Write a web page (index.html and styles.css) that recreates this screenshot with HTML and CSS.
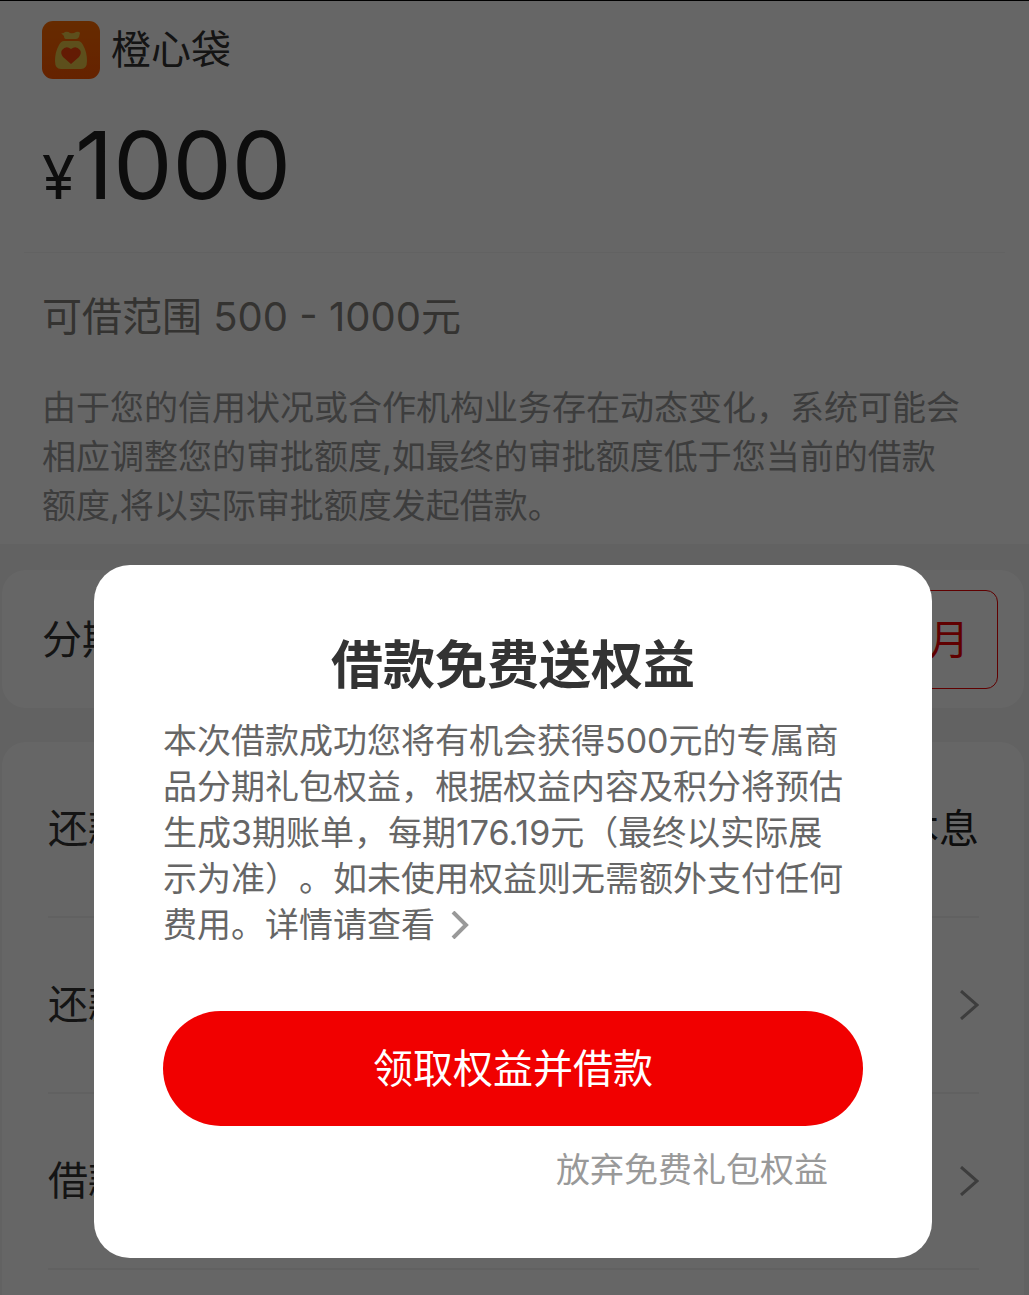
FILE: index.html
```html
<!DOCTYPE html>
<html lang="zh-CN">
<head>
  <meta charset="UTF-8" />
  <meta name="viewport" content="width=device-width, initial-scale=1" />
  <title>橙心袋</title>
  <link rel="stylesheet" href="styles.css">
</head>
<body>

  <main class="page">
    <section class="panel amount-panel">
      <header class="brand">
        <svg class="brand-logo" viewBox="0 0 58 58" aria-hidden="true">
          <defs>
            <linearGradient id="logoBg" x1="0" y1="0" x2="0" y2="1">
              <stop offset="0" stop-color="#ff6c00" />
              <stop offset="1" stop-color="#fd5600" />
            </linearGradient>
          </defs>
          <rect width="58" height="58" rx="11" fill="url(#logoBg)" />
          <path d="M19 12 Q21 13 23 11 Q26 10 28 12 Q31 13 34 11 Q37 10 38 12 L37 16 Q36 18 34 18 H24 Q22 18 22 15 Z" fill="#e8c547" />
          <path d="M22 20 H36 Q39 20 41 24 Q45 31 45 40 Q45 48 39 48 H19 Q13 48 13 40 Q13 31 17 24 Q19 20 22 20 Z" fill="#e8c547" />
          <path d="M29 43 L21 36 Q18 32 20 29 Q24 24 29 28 Q34 24 38 29 Q40 32 37 36 Z" fill="#f8440c" />
        </svg>
        <h1 class="brand-name">橙心袋</h1>
      </header>

      <div class="amount">
        <label class="amount-sign" for="amount">¥</label>
        <input class="amount-input" type="text" id="amount" inputmode="numeric" value="1000" />
      </div>

      <p class="range">可借范围 500 - 1000元</p>
      <p class="notice">由于您的信用状况或合作机构业务存在动态变化，系统可能会<br>相应调整您的审批额度,如最终的审批额度低于您当前的借款<br>额度,将以实际审批额度发起借款。</p>
    </section>

    <section class="panel term-panel">
      <span>分期</span>
      <button type="button" class="term">月</button>
    </section>

    <section class="panel detail-panel">
      <div class="row">
        <span>还款</span>
        <span class="row-value">本息</span>
      </div>
      <a class="row" href="#">
        <span>还款</span>
        <svg class="arrow" viewBox="0 0 20 30" aria-hidden="true"><path d="M2 1 L18 15 L2 29" /></svg>
      </a>
      <a class="row" href="#">
        <span>借款</span>
        <svg class="arrow" viewBox="0 0 20 30" aria-hidden="true"><path d="M2 1 L18 15 L2 29" /></svg>
      </a>
    </section>
  </main>

  <div class="overlay">
    <div class="modal" role="dialog" aria-modal="true" aria-labelledby="modalTitle">
      <h2 class="modal-title" id="modalTitle">借款免费送权益</h2>
      <p class="modal-text">本次借款成功您将有机会获得500元的专属商<br>品分期礼包权益，根据权益内容及积分将预估<br>生成3期账单，每期176.19元（最终以实际展<br>示为准）。如未使用权益则无需额外支付任何<br>费用。<a class="modal-more" href="#">详情请查看<svg class="more-arrow" viewBox="0 0 18 28" aria-hidden="true"><path d="M2 1 L15 14 L2 27" /></svg></a></p>
      <button type="button" class="btn-accept">领取权益并借款</button>
      <button type="button" class="btn-decline">放弃免费礼包权益</button>
    </div>
  </div>

</body>
</html>
```
FILE: styles.css
```css
* {
  box-sizing: border-box;
}
body {
  margin: 0;
  background: #f5f5f5;
  color: #333;
  font-family: Inter, "Noto Sans CJK SC", sans-serif;
  font-size: 40px;
  line-height: 60px;
  text-spacing-trim: space-all;
}
h1, h2, p {
  margin: 0;
  font-weight: normal;
}
a {
  color: inherit;
  text-decoration: none;
}
button, input {
  font: inherit;
  border: none;
  padding: 0;
  background: none;
}
button {
  cursor: pointer;
}
.page {
  height: 100vh;
  overflow: hidden;
  border-top: 1px solid #000;
}
.panel {
  background: #fff;
}

/* amount */
.amount-panel {
  padding: 19px 42px 14px;
}
.brand {
  display: flex;
  align-items: center;
  gap: 11px;
}
.brand-logo {
  width: 58px;
  height: 58px;
}
.brand-name {
  font-size: 40px;
}
.amount {
  display: flex;
  align-items: baseline;
  margin: 0 -18px;
  padding: 25px 18px 27px;
  border-bottom: 1px solid #f5f5f5;
  color: #222;
}
.amount-sign {
  font-size: 60px;
}
.amount-input {
  flex: 1;
  min-width: 0;
  height: 120px;
  color: inherit;
  font-size: 94px;
}
.range {
  padding: 34px 0 36px;
  color: #83807a;
}
.notice {
  color: #999;
  font-size: 34px;
  line-height: 49px;
}

/* installments */
.term-panel {
  display: flex;
  align-items: center;
  justify-content: space-between;
  margin: 26px 5px 34px 2px;
  padding: 20px 26px 19px 40px;
  border-radius: 24px;
}
.term {
  min-width: 160px;
  height: 99px;
  padding: 0 28px;
  border: 1px solid #f10000;
  border-radius: 12px;
  color: #f10000;
  text-align: right;
}

/* repayment details */
.detail-panel {
  margin: 0 5px 0 2px;
  padding: 0 45px 100px 46px;
  border-radius: 24px;
}
.row {
  display: flex;
  align-items: center;
  justify-content: space-between;
  height: 176px;
  border-bottom: 2px solid #f3f3f3;
}
.row-value {
  color: #222;
}
.arrow {
  width: 20px;
  height: 30px;
  fill: none;
  stroke: #999;
  stroke-width: 3;
}

/* dialog */
.overlay {
  position: fixed;
  inset: 0;
  display: flex;
  align-items: flex-end;
  padding: 0 97px 37px 94px;
  background: rgba(0, 0, 0, 0.6);
}
.modal {
  display: flex;
  flex-direction: column;
  width: 100%;
  padding: 65px 69px 58px;
  border-radius: 36px;
  background: #fff;
}
.modal-title {
  margin-bottom: 16px;
  font-size: 52px;
  font-weight: bold;
  line-height: 72px;
  text-align: center;
}
.modal-text {
  color: #666;
  font-size: 34px;
  line-height: 46px;
  white-space: nowrap;
}
.more-arrow {
  width: 18px;
  height: 28px;
  margin-left: 16px;
  vertical-align: -2px;
  fill: none;
  stroke: #999;
  stroke-width: 4;
}
.btn-accept {
  height: 115px;
  margin-top: 63px;
  border-radius: 58px;
  background: #f10000;
  color: #fff;
}
.btn-decline {
  align-self: flex-end;
  margin: 14px 35px 0 0;
  color: #999;
  font-size: 34px;
}
```
